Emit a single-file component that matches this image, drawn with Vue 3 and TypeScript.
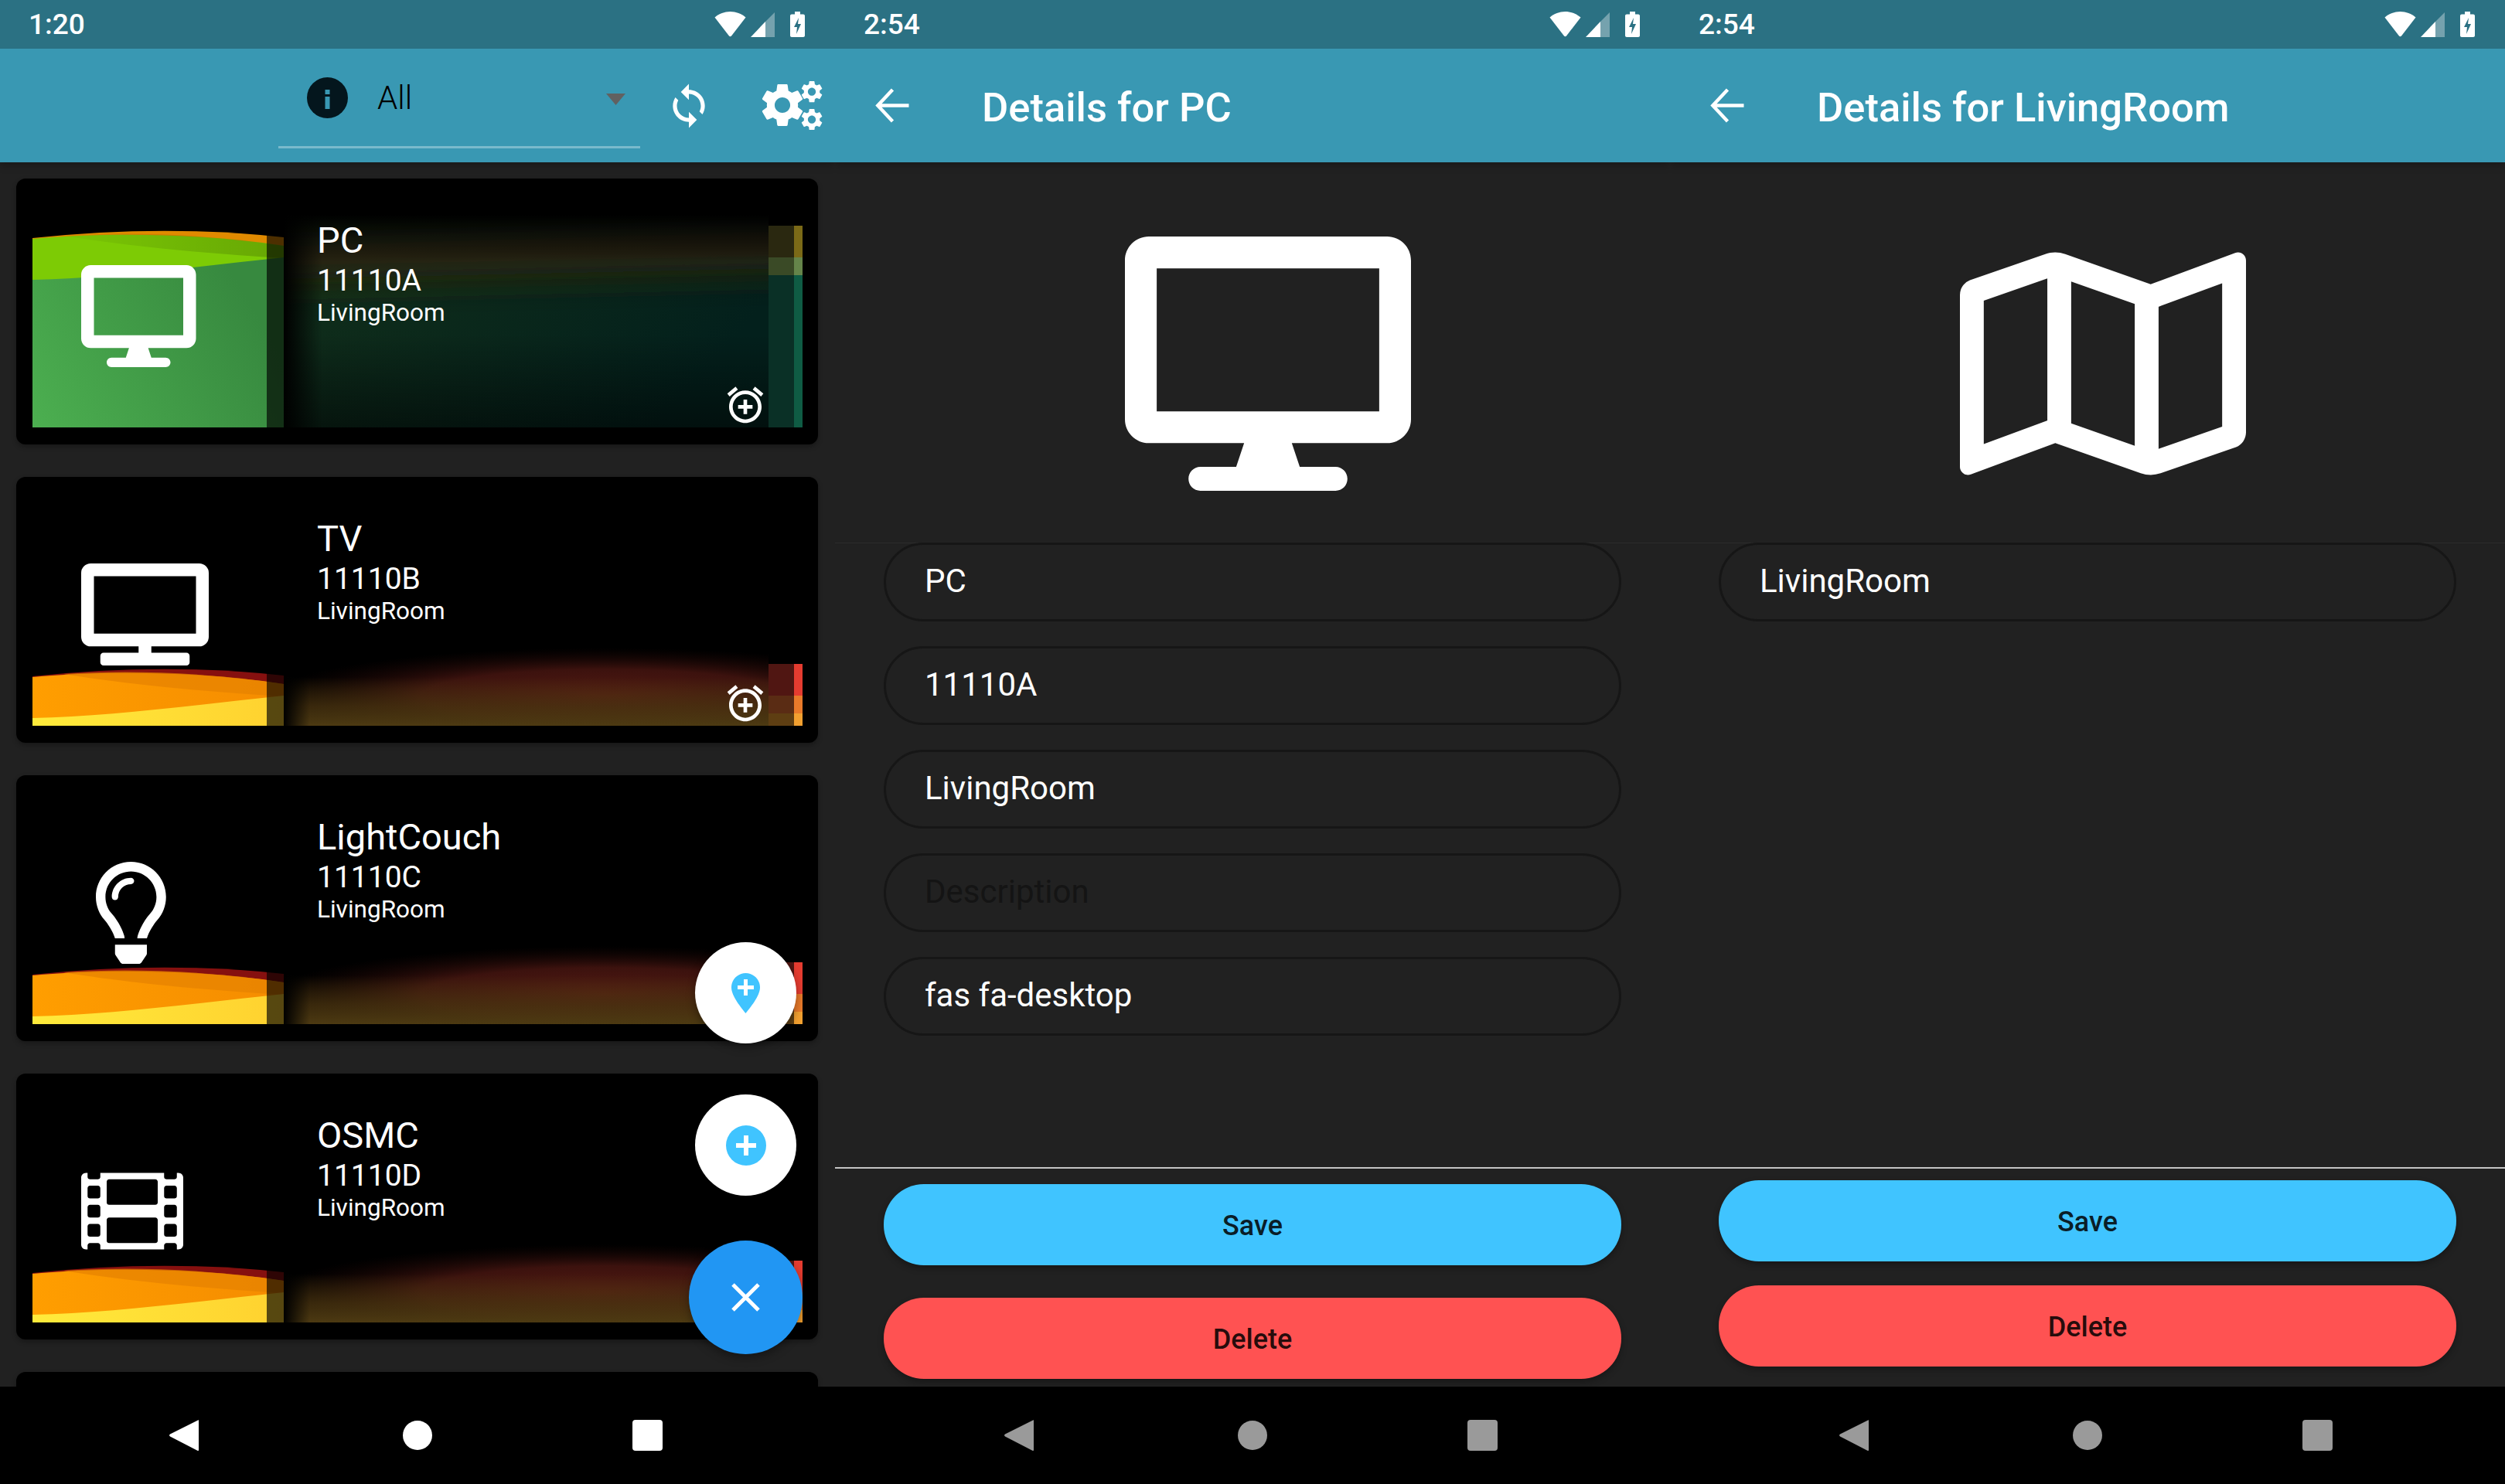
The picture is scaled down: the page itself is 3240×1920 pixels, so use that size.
<template>
  <div class="screens">
    <svg class="shared-defs" width="0" height="0">
      <defs>
        <linearGradient id="green-main" x1="0" y1="1" x2="1" y2="0.6">
          <stop offset="0" stop-color="#4caf50" />
          <stop offset="1" stop-color="#37893f" />
        </linearGradient>
        <linearGradient id="warm-main" x1="0" y1="0" x2="1" y2="0">
          <stop offset="0" stop-color="#ffeb3b" />
          <stop offset="1" stop-color="#ffd12f" />
        </linearGradient>
        <linearGradient id="warm-mid" x1="0" y1="0" x2="1" y2="0">
          <stop offset="0" stop-color="#ff9e00" />
          <stop offset="1" stop-color="#f58c00" />
        </linearGradient>
        <linearGradient id="green-shade" x1="0" y1="0" x2="1" y2="0">
          <stop offset="0" stop-color="#000" stop-opacity="0.02" />
          <stop offset="1" stop-color="#000" stop-opacity="0.18" />
        </linearGradient>
        <linearGradient id="fade-left" x1="0" y1="0" x2="1" y2="0">
          <stop offset="0" stop-color="#000" />
          <stop offset="1" stop-color="#000" stop-opacity="0" />
        </linearGradient>
        <linearGradient id="fade-top" x1="0" y1="0" x2="0" y2="1">
          <stop offset="0" stop-color="#000" />
          <stop offset="1" stop-color="#000" stop-opacity="0" />
        </linearGradient>
        <linearGradient id="fade-bottom" x1="0" y1="0" x2="0" y2="1">
          <stop offset="0" stop-color="#000" stop-opacity="0" />
          <stop offset="1" stop-color="#000" stop-opacity="0.5" />
        </linearGradient>
        <linearGradient id="green-base" x1="0" y1="0" x2="1" y2="0.4">
          <stop offset="0" stop-color="#12301a" />
          <stop offset="1" stop-color="#03201c" />
        </linearGradient>
        <linearGradient id="warm-amber" gradientUnits="userSpaceOnUse" x1="0" y1="238" x2="0" y2="301">
          <stop offset="0" stop-color="#4d3a10" stop-opacity="0" />
          <stop offset="0.6" stop-color="#4a3510" stop-opacity="0.75" />
          <stop offset="1" stop-color="#4d3a12" />
        </linearGradient>
        <radialGradient id="warm-red" gradientUnits="userSpaceOnUse" cx="0" cy="0" r="1" gradientTransform="translate(740 262) scale(430 62)">
          <stop offset="0" stop-color="#521912" />
          <stop offset="0.55" stop-color="#3c120e" />
          <stop offset="1" stop-color="#1c0705" stop-opacity="0" />
        </radialGradient>
        <filter id="soft-lg" filterUnits="userSpaceOnUse" x="0" y="-100" width="1200" height="600">
          <feGaussianBlur stdDeviation="24" />
        </filter>
        <clipPath id="middle-green">
          <rect x="325" y="26" width="627" height="275" />
        </clipPath>
        <clipPath id="middle-warm">
          <rect x="325" y="190" width="627" height="111" />
        </clipPath>
      </defs>
    </svg>

    <!-- device list -->
    <section class="phone">
      <header class="status">
        <span class="time">1:20</span>
        <span class="status-icons">
          <svg width="41" height="33" viewBox="0 0 41 33"><path :d="wifiPath" fill="#fff" /></svg>
          <svg width="31" height="32" viewBox="0 0 31 32">
            <path d="M31 0v32H12V19z" fill="#fff" fill-opacity="0.35" />
            <path d="M19 12v20H0z" fill="#fff" />
          </svg>
          <svg width="19" height="33" viewBox="0 0 19 33"><path :d="batteryPath" fill="#fff" /><path :d="boltPath" fill="#2b7183" /></svg>
        </span>
      </header>

      <div class="appbar">
        <div class="picker">
          <svg width="53" height="53" viewBox="0 0 53 53">
            <circle cx="26.5" cy="26.5" r="26.5" fill="#04161d" />
            <rect x="23.5" y="16" width="6" height="6" fill="#3998b3" />
            <rect x="23.5" y="25" width="6" height="16" fill="#3998b3" />
          </svg>
          <span class="picker-label">All</span>
          <svg class="caret" width="25" height="15" viewBox="0 0 25 15"><path d="M0 0h25L12.5 15z" fill="#616161" /></svg>
        </div>
        <svg class="sync" width="62" height="62" viewBox="0 0 24 24"><path :d="syncPath" fill="#fff" /></svg>
        <svg class="cogs" width="80" height="63" viewBox="0 0 80 63">
          <path :d="gearPath" fill="#fff" fill-rule="evenodd" transform="translate(-6.6 -2.6) scale(2.8)" />
          <path :d="gearPath" fill="#fff" fill-rule="evenodd" transform="translate(48 -3.4) scale(1.42)" />
          <path :d="gearPath" fill="#fff" fill-rule="evenodd" transform="translate(48 32.6) scale(1.42)" />
        </svg>
      </div>

      <div class="device-list">
        <article v-for="card in cards" :key="card.name" class="card">
          <svg class="art" width="996" height="301" viewBox="0 0 996 301">
            <g :transform="`translate(0 ${card.theme === 'green' ? 0 : 181})`">
              <path d="M0 56Q170 38 325 55V125H0z" :fill="card.theme === 'green' ? '#e08a00' : '#86100f'" />
              <path d="M0 57C100 48 220 50 325 66V125H0z" :fill="card.theme === 'green' ? '#7dcb05' : 'url(#warm-mid)'" />
              <path d="M40 53C120 66 220 76 325 82V66C220 50 120 48 40 53z" :fill="card.theme === 'green' ? 'url(#green-shade)' : '#e58200'" :fill-opacity="card.theme === 'green' ? 1 : 0.7" />
            </g>
            <path v-if="card.theme === 'green'" d="M0 110C100 108 220 92 325 81V301H0z" fill="url(#green-main)" />
            <path v-else d="M0 291C100 289 220 273 325 262V301H0z" fill="url(#warm-main)" />
            <rect x="303" y="0" width="22" height="301" fill="#000" fill-opacity="0.66" />

            <g v-if="card.theme === 'green'" clip-path="url(#middle-green)">
              <rect x="325" y="26" width="627" height="275" fill="url(#green-base)" />
              <path d="M280 50L1000 30V95L280 110z" fill="#2c2408" filter="url(#soft-lg)" />
              <rect x="325" y="26" width="627" height="60" fill="url(#fade-top)" />
              <rect x="325" y="180" width="627" height="121" fill="url(#fade-bottom)" />
              <rect x="325" y="26" width="50" height="275" fill="url(#fade-left)" />
            </g>
            <g v-else clip-path="url(#middle-warm)">
              <rect x="325" y="190" width="627" height="111" fill="url(#warm-red)" />
              <rect x="325" y="238" width="627" height="63" fill="url(#warm-amber)" />
              <rect x="325" y="190" width="34" height="111" fill="url(#fade-left)" />
            </g>

            <g v-for="(strip, s) in stripes[card.theme]" :key="s">
              <rect x="952" :y="strip.y" width="33" :height="strip.h" :fill="strip.dim" />
              <rect x="985" :y="strip.y" width="11" :height="strip.h" :fill="strip.lit" />
            </g>
          </svg>

          <div class="card-body">
            <div class="card-icon" :class="{ narrow: card.icon === 'bulb' }">
              <svg height="132" :width="(icons[card.icon].w * 132) / icons[card.icon].h" :viewBox="`0 0 ${icons[card.icon].w} ${icons[card.icon].h}`">
                <path :d="icons[card.icon].d" fill="#fff" />
              </svg>
            </div>
            <div class="card-info">
              <div class="card-name">{{ card.name }}</div>
              <div class="card-code">{{ card.code }}</div>
              <div class="card-room">{{ card.room }}</div>
            </div>
          </div>

          <svg v-if="card.alarm" class="alarm" width="56" height="56" viewBox="0 0 24 24"><path :d="alarmPath" fill="#fff" /></svg>
        </article>

        <!-- next card, cut off by the nav bar -->
        <article class="card"></article>

        <div class="fabs">
          <button class="fab fab-light">
            <svg width="37" height="52" viewBox="0 0 37 52">
              <path d="M18.5 0C8.3 0 0 8.3 0 18.5 0 30 13.5 45.5 18.5 52 23.5 45.500 37 30 37 18.500 37 8.300 28.700 0 18.500 0z" fill="#40c4ff" />
              <path d="M16 8h5v8h8v5h-8v8h-5v-8H8v-5h8z" fill="#fff" />
            </svg>
          </button>
          <button class="fab fab-light second">
            <svg width="52" height="52" viewBox="0 0 52 52">
              <circle cx="26" cy="26" r="26" fill="#40c4ff" />
              <path d="M23 13h6v10h10v6H29v10h-6V29H13v-6h10z" fill="#fff" />
            </svg>
          </button>
          <button class="fab fab-main">
            <svg width="37" height="37" viewBox="0 0 37 37"><path d="M2 2l33 33M35 2L2 35" stroke="#fff" stroke-width="5" /></svg>
          </button>
        </div>
      </div>

      <footer class="nav">
        <svg width="38" height="42" viewBox="0 0 38 42"><path d="M37 1.500C37.800.9 38 1.500 38 2.500v37c0 1-.2 2-1.200 1.400L1 22.500c-1.300-.8-1.300-2.200 0-3z" fill="#fff" /></svg>
        <span class="nav-dot"></span>
        <span class="nav-square"></span>
      </footer>
    </section>

    <!-- detail screens -->
    <section v-for="page in pages" :key="page.title" class="phone">
      <header class="status">
        <span class="time">2:54</span>
        <span class="status-icons">
          <svg width="41" height="33" viewBox="0 0 41 33"><path :d="wifiPath" fill="#fff" /></svg>
          <svg width="31" height="32" viewBox="0 0 31 32">
            <path d="M31 0v32H12V19z" fill="#fff" fill-opacity="0.35" />
            <path d="M19 12v20H0z" fill="#fff" />
          </svg>
          <svg width="19" height="33" viewBox="0 0 19 33"><path :d="batteryPath" fill="#fff" /><path :d="boltPath" fill="#2b7183" /></svg>
        </span>
      </header>

      <div class="appbar titled">
        <svg width="63" height="63" viewBox="0 0 24 24">
          <path d="M20 12H5.500M12 4.200L4.700 12l7.300 7.800" fill="none" stroke="#fff" stroke-width="1.700" />
        </svg>
        <h1 class="title">{{ page.title }}</h1>
      </div>

      <div class="details">
        <div class="hero">
          <svg width="370" height="329" viewBox="0 0 576 512"><path :d="icons[page.icon].d" fill="#fff" /></svg>
        </div>
        <div class="form">
          <div v-for="field in page.fields" :key="field.text" class="field" :class="{ empty: field.empty }">{{ field.text }}</div>
        </div>
        <div class="actions" :class="{ tight: page.tight }">
          <button class="pill save">Save</button>
          <button class="pill delete">Delete</button>
        </div>
      </div>

      <footer class="nav muted">
        <svg width="38" height="42" viewBox="0 0 38 42"><path d="M37 1.500C37.800.9 38 1.500 38 2.500v37c0 1-.2 2-1.200 1.400L1 22.500c-1.300-.8-1.300-2.200 0-3z" fill="#9a9a9a" /></svg>
        <span class="nav-dot"></span>
        <span class="nav-square"></span>
      </footer>
    </section>
  </div>
</template>

<script setup lang="ts">
type Theme = "green" | "warm";

interface Card {
  name: string;
  code: string;
  room: string;
  icon: string;
  theme: Theme;
  alarm?: boolean;
}

const desktop =
  "M528 0H48C21.5 0 0 21.5 0 48v320c0 26.500 21.500 48 48 48h192l-16 48h-72c-13.300 0-24 10.700-24 24s10.700 24 24 24h272c13.300 0 24-10.700 24-24s-10.700-24-24-24h-72l-16-48h192c26.500 0 48-21.500 48-48V48c0-26.500-21.500-48-48-48zm-16 352H64V64h448v288z";

const icons: Record<string, { w: number; h: number; d: string }> = {
  desktop: { w: 576, h: 512, d: desktop },
  tv: {
    w: 640,
    h: 512,
    d: "M592 0H48A48 48 0 0 0 0 48v320a48 48 0 0 0 48 48h240v32H112a16 16 0 0 0-16 16v32a16 16 0 0 0 16 16h416a16 16 0 0 0 16-16v-32a16 16 0 0 0-16-16H352v-32h240a48 48 0 0 0 48-48V48a48 48 0 0 0-48-48zm-16 352H64V64h512z",
  },
  bulb: {
    w: 352,
    h: 512,
    d: "M176 80c-52.940 0-96 43.060-96 96 0 8.840 7.160 16 16 16s16-7.160 16-16c0-35.300 28.720-64 64-64 8.840 0 16-7.160 16-16s-7.160-16-16-16zM96.060 459.170c0 3.150.93 6.220 2.680 8.840l24.510 36.840c2.970 4.460 7.970 7.140 13.320 7.140h78.850c5.360 0 10.360-2.680 13.320-7.140l24.510-36.840c1.740-2.620 2.670-5.700 2.680-8.840l.05-43.180H96.020l.04 43.180zM176 0C73.720 0 0 82.970 0 176c0 44.370 16.450 84.850 43.560 115.780 16.640 18.990 42.740 58.800 52.420 92.160v.06h48v-.12c-.01-4.770-.72-9.510-2.150-14.070-5.590-17.810-22.820-64.770-62.170-109.670-20.540-23.430-31.520-53.150-31.610-84.140-.2-73.640 59.670-128 127.950-128 70.580 0 128 57.420 128 128 0 30.970-11.240 60.850-31.650 84.140-39.110 44.610-56.420 91.470-62.100 109.460a47.507 47.507 0 0 0-2.220 14.300v.1h48v-.05c9.680-33.370 35.780-73.180 52.420-92.160C335.550 260.850 352 220.370 352 176 352 78.800 273.200 0 176 0z",
  },
  film: {
    w: 512,
    h: 512,
    d: "M488 64h-8v20c0 6.600-5.400 12-12 12h-40c-6.600 0-12-5.400-12-12V64H96v20c0 6.600-5.400 12-12 12H44c-6.600 0-12-5.400-12-12V64h-8C10.700 64 0 74.700 0 88v336c0 13.300 10.700 24 24 24h8v-20c0-6.600 5.400-12 12-12h40c6.600 0 12 5.400 12 12v20h320v-20c0-6.600 5.400-12 12-12h40c6.600 0 12 5.400 12 12v20h8c13.300 0 24-10.700 24-24V88c0-13.300-10.700-24-24-24zM96 372c0 6.600-5.400 12-12 12H44c-6.600 0-12-5.400-12-12v-40c0-6.600 5.400-12 12-12h40c6.600 0 12 5.400 12 12v40zm0-96c0 6.600-5.400 12-12 12H44c-6.600 0-12-5.400-12-12v-40c0-6.600 5.400-12 12-12h40c6.600 0 12 5.400 12 12v40zm0-96c0 6.600-5.400 12-12 12H44c-6.600 0-12-5.400-12-12v-40c0-6.600 5.400-12 12-12h40c6.600 0 12 5.400 12 12v40zm288 224c0 6.600-5.400 12-12 12H140c-6.600 0-12-5.400-12-12V300c0-6.600 5.400-12 12-12h232c6.600 0 12 5.400 12 12v104zm0-192c0 6.600-5.400 12-12 12H140c-6.600 0-12-5.400-12-12V108c0-6.600 5.400-12 12-12h232c6.600 0 12 5.400 12 12v104zm96 160c0 6.600-5.400 12-12 12h-40c-6.600 0-12-5.400-12-12v-40c0-6.600 5.400-12 12-12h40c6.600 0 12 5.400 12 12v40zm0-96c0 6.600-5.400 12-12 12h-40c-6.600 0-12-5.400-12-12v-40c0-6.600 5.400-12 12-12h40c6.600 0 12 5.400 12 12v40zm0-96c0 6.600-5.400 12-12 12h-40c-6.600 0-12-5.400-12-12v-40c0-6.600 5.400-12 12-12h40c6.600 0 12 5.400 12 12v40z",
  },
  map: {
    w: 576,
    h: 512,
    d: "M560.020 32c-1.960 0-3.980.37-5.960 1.160L384.010 96H384L212 35.280A64.252 64.252 0 0 0 191.760 32c-6.690 0-13.370 1.050-19.810 3.140L20.120 87.950A32.006 32.006 0 0 0 0 117.660v346.320C0 473.170 7.530 480 15.990 480c1.960 0 3.970-.37 5.960-1.160L192 416l172 60.710a63.980 63.980 0 0 0 40.050.15l151.830-52.810A31.996 31.996 0 0 0 576 394.340V48.020c0-9.190-7.530-16.020-15.980-16.020zM224 90.420l128 45.190v285.970l-128-45.190V90.420zM48 418.050V129.070l128-44.530v286.200l-.64.23L48 418.050zm480-35.130l-128 44.530V141.260l.64-.24L528 93.950v288.970z",
  },
};

const wifiPath = "M20.500 0C28 0 35 2.800 40.500 7.500L22 31.500c-.8 1-2.200 1-3 0L.5 7.500C6 2.800 13 0 20.500 0z";
const batteryPath = "M6 0h7v3.500h4c1.100 0 2 .9 2 2V31c0 1.100-.9 2-2 2H2c-1.100 0-2-.9-2-2V5.500c0-1.100.9-2 2-2h4z";
const boltPath = "M11 8L5 20h4l-1 9 6-13h-4z";
const syncPath =
  "M12 4V1L8 5l4 4V6c3.310 0 6 2.690 6 6 0 1.010-.25 1.970-.7 2.800l1.460 1.460C19.540 15.030 20 13.570 20 12c0-4.420-3.580-8-8-8zm0 14c-3.310 0-6-2.690-6-6 0-1.010.25-1.970.7-2.800L5.240 7.740C4.460 8.970 4 10.430 4 12c0 4.420 3.580 8 8 8v3l4-4-4-4v3z";
const gearPath =
  "M19.140 12.940c.04-.3.06-.61.06-.94 0-.32-.02-.64-.07-.94l2.030-1.580c.18-.14.23-.41.12-.61l-1.920-3.320c-.12-.22-.37-.29-.59-.22l-2.390.96c-.5-.38-1.030-.7-1.620-.94l-.36-2.540c-.04-.24-.24-.41-.48-.41h-3.840c-.24 0-.43.17-.47.41l-.36 2.540c-.59.24-1.130.57-1.620.94l-2.390-.96c-.22-.08-.47 0-.59.22L2.740 8.870c-.12.21-.08.47.12.61l2.030 1.580c-.05.3-.09.63-.09.94s.02.64.07.94l-2.030 1.580c-.18.14-.23.41-.12.61l1.920 3.320c.12.22.37.29.59.22l2.390-.96c.5.38 1.030.7 1.620.94l.36 2.540c.05.24.24.41.48.41h3.840c.24 0 .44-.17.47-.41l.36-2.540c.59-.24 1.130-.56 1.620-.94l2.390.96c.22.08.47 0 .59-.22l1.920-3.320c.12-.22.07-.47-.12-.61l-2.010-1.580zM12 15.600c-1.980 0-3.600-1.620-3.600-3.600s1.620-3.600 3.600-3.600 3.600 1.620 3.600 3.600-1.620 3.600-3.600 3.600z";
const alarmPath =
  "M7.880 3.390L6.600 1.860 2 5.710l1.290 1.530 4.590-3.850zM22 5.720l-4.600-3.860-1.290 1.530 4.600 3.860L22 5.720zM12 4c-4.970 0-9 4.030-9 9s4.020 9 9 9c4.970 0 9-4.030 9-9s-4.030-9-9-9zm0 16c-3.870 0-7-3.130-7-7s3.130-7 7-7 7 3.130 7 7-3.130 7-7 7zm1-11h-2v3H8v2h3v3h2v-3h3v-2h-3V9z";

const stripes: Record<Theme, { y: number; h: number; dim: string; lit: string }[]> = {
  green: [
    { y: 40, h: 41, dim: "#2a2810", lit: "#7b6a17" },
    { y: 81, h: 23, dim: "#3a4a26", lit: "#65854a" },
    { y: 104, h: 197, dim: "#0a3026", lit: "#0f5c44" },
  ],
  warm: [
    { y: 221, h: 41, dim: "#501612", lit: "#e53c30" },
    { y: 262, h: 23, dim: "#5a2c14", lit: "#e97a2a" },
    { y: 285, h: 16, dim: "#5e3e12", lit: "#f2a030" },
  ],
};

const cards: Card[] = [
  { name: "PC", code: "11110A", room: "LivingRoom", icon: "desktop", theme: "green", alarm: true },
  { name: "TV", code: "11110B", room: "LivingRoom", icon: "tv", theme: "warm", alarm: true },
  { name: "LightCouch", code: "11110C", room: "LivingRoom", icon: "bulb", theme: "warm" },
  { name: "OSMC", code: "11110D", room: "LivingRoom", icon: "film", theme: "warm" },
];

const pages = [
  {
    title: "Details for PC",
    icon: "desktop",
    tight: false,
    fields: [
      { text: "PC" },
      { text: "11110A" },
      { text: "LivingRoom" },
      { text: "Description", empty: true },
      { text: "fas fa-desktop" },
    ],
  },
  {
    title: "Details for LivingRoom",
    icon: "map",
    tight: true,
    fields: [{ text: "LivingRoom" }],
  },
];
</script>

<style scoped>
.screens {
  display: flex;
  width: 3240px;
  height: 1920px;
  overflow: hidden;
  font-family: Roboto, "Noto Sans", sans-serif;
  background: #212121;
  color: #fff;
}

.shared-defs {
  position: absolute;
}

.phone {
  display: flex;
  flex-direction: column;
  width: 1080px;
  height: 1920px;
}

.status {
  display: flex;
  flex: none;
  align-items: center;
  justify-content: space-between;
  height: 63px;
  padding: 0 39px 0 37px;
  box-sizing: border-box;
  background: #2b7183;
}

.time {
  font-size: 37px;
  font-weight: 500;
  line-height: 60px;
  color: #fff;
}

.status-icons {
  display: flex;
  align-items: center;
  gap: 6px;
}

.status-icons svg:last-child {
  margin-left: 14px;
}

.appbar {
  position: relative;
  z-index: 2;
  display: flex;
  flex: none;
  align-items: center;
  height: 147px;
  background: #3998b3;
  box-shadow: 0 4px 10px rgba(0, 0, 0, 0.25);
  clip-path: inset(0 0 -20px 0);
}

.picker {
  display: flex;
  align-items: center;
  box-sizing: border-box;
  width: 468px;
  height: 129px;
  margin-left: 360px;
  margin-bottom: 18px;
  padding: 0 19px 0 37px;
  border-bottom: 3px solid rgba(255, 255, 255, 0.33);
}

.picker-label {
  margin-left: 38px;
  font-size: 42px;
  font-weight: 300;
  color: #000;
}

.caret {
  margin-left: auto;
  margin-top: 4px;
}

.sync {
  margin-left: 32px;
}

.cogs {
  margin-left: 63px;
}

.device-list {
  position: relative;
  display: flex;
  flex: 1;
  flex-direction: column;
  gap: 42px;
  min-height: 0;
  overflow: hidden;
  padding: 21px 22px 0 21px;
}

.card {
  position: relative;
  flex: none;
  height: 344px;
  border-radius: 12px;
  background: #000;
  box-shadow: 0 3px 6px rgba(0, 0, 0, 0.3);
}

.art {
  position: absolute;
  top: 21px;
  left: 21px;
}

.card-body {
  position: relative;
  display: flex;
}

.card-icon {
  box-sizing: border-box;
  width: 389px;
  height: 344px;
  padding: 112px 0 0 84px;
}

.card-icon.narrow {
  padding-left: 103px;
}

.card-info {
  padding-top: 53px;
}

.card-name {
  font-size: 47px;
  line-height: 54px;
}

.card-code {
  margin-top: 2px;
  font-size: 39px;
  line-height: 46px;
}

.card-room {
  font-size: 31.5px;
  line-height: 38px;
}

.alarm {
  position: absolute;
  top: 265px;
  left: 915px;
}

.fabs {
  position: absolute;
  top: 1009px;
  right: 42px;
  display: flex;
  flex-direction: column;
  align-items: center;
  width: 147px;
}

.fab {
  display: flex;
  align-items: center;
  justify-content: center;
  padding: 0;
  border: none;
  border-radius: 50%;
  box-shadow: 0 5px 12px rgba(0, 0, 0, 0.35);
}

.fab-light {
  width: 131px;
  height: 131px;
  background: #fff;
}

.fab-light.second {
  margin-top: 66px;
}

.fab-main {
  width: 147px;
  height: 147px;
  margin-top: 58px;
  background: #2196f3;
}

.details {
  display: flex;
  flex: 1;
  flex-direction: column;
  min-height: 0;
}

.hero {
  box-sizing: border-box;
  height: 493px;
  padding: 96px 0 0 375px;
  border-bottom: 1px solid rgba(255, 255, 255, 0.05);
}

.hero svg {
  display: block;
}

.form {
  display: flex;
  flex: 1;
  flex-direction: column;
  gap: 32px;
  padding: 0 63px;
  margin-top: -1px;
}

.field {
  display: flex;
  align-items: center;
  box-sizing: border-box;
  height: 102px;
  padding: 0 50px 3px;
  border: 3px solid #161616;
  border-radius: 51px;
  font-size: 42px;
  font-weight: 400;
  color: #fff;
}

.field.empty {
  color: #141414;
}

.actions {
  display: flex;
  flex: none;
  flex-direction: column;
  gap: 42px;
  height: 284px;
  box-sizing: border-box;
  padding: 20px 63px 0;
  border-top: 2px solid #c4c4c4;
}

.actions.tight {
  gap: 31px;
  padding-top: 15px;
}

.pill {
  flex: none;
  height: 105px;
  padding: 2px 0 0;
  border: none;
  border-radius: 52px;
  font-family: inherit;
  font-size: 36px;
  font-weight: 500;
  color: rgba(0, 0, 0, 0.87);
  box-shadow: 0 4px 8px rgba(0, 0, 0, 0.3);
}

.save {
  background: #40c4ff;
}

.delete {
  background: #ff5252;
}

.nav {
  position: relative;
  z-index: 3;
  display: flex;
  flex: none;
  align-items: center;
  box-sizing: border-box;
  height: 126px;
  padding-left: 219px;
  background: #000;
}

.nav-dot {
  width: 38px;
  height: 38px;
  margin-left: 264px;
  border-radius: 50%;
  background: #fff;
}

.nav-square {
  width: 39px;
  height: 40px;
  margin-left: 259px;
  border-radius: 4px;
  background: #fff;
}

.muted .nav-dot,
.muted .nav-square {
  background: #9a9a9a;
}

.title {
  margin: 4px 0 0 84px;
  font-size: 52.5px;
  font-weight: 500;
  color: #fff;
}

.titled {
  padding-left: 43px;
}
</style>

<style>
html,
body {
  margin: 0;
  background: #212121;
}
</style>
